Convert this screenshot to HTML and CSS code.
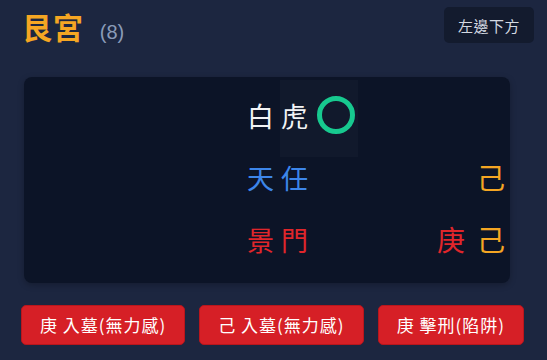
FILE: index.html
```html
<!DOCTYPE html>
<html lang="zh-Hant">
<head>
    <meta charset="UTF-8">
    <meta name="viewport" content="width=device-width, initial-scale=1.0">
    <title>艮宮</title>
    <link rel="stylesheet" href="styles.css">
</head>
<body>

<div class="palace">
    <div class="palace-header">
        <h1>艮宮 <span class="count">(8)</span></h1>
        <button class="pos-btn">左邊下方</button>
    </div>

    <div class="board">
        <div class="glow"></div>
        <div class="row">
            <span class="name white">白虎</span>
            <span class="ring"></span>
        </div>
        <div class="row">
            <span class="name blue">天任</span>
            <span class="stems"><span class="orange">己</span></span>
        </div>
        <div class="row">
            <span class="name red">景門</span>
            <span class="stems"><span class="red">庚</span><span class="orange">己</span></span>
        </div>
    </div>

    <div class="tags">
        <span class="tag">庚 入墓(無力感)</span>
        <span class="tag">己 入墓(無力感)</span>
        <span class="tag">庚 擊刑(陷阱)</span>
    </div>
</div>

</body>
</html>
```

FILE: styles.css
```css
body {
    margin: 0;
    background-color: #1c2640;
    font-family: "Noto Sans CJK TC", "Noto Sans", sans-serif;
    color: #e5e7eb;
}
.palace {
    padding: 7px 13px 0 22px;
}
.palace-header {
    display: flex;
    justify-content: space-between;
    align-items: flex-start;
    height: 70px;
}
h1 {
    margin: 0;
    font-size: 30px;
    line-height: 38px;
    font-weight: 700;
    color: #f5a623;
    letter-spacing: 1px;
}
.count {
    margin-left: 8px;
    font-family: "Liberation Sans", sans-serif;
    font-size: 20px;
    font-weight: 400;
    letter-spacing: 0;
    color: #8a9bb8;
}
.pos-btn {
    background-color: #131b2e;
    color: #d4d9e2;
    border: none;
    border-radius: 5px;
    height: 36px;
    padding: 0 14px;
    font-family: inherit;
    font-size: 15px;
    letter-spacing: 0.5px;
    cursor: pointer;
}
.board {
    position: relative;
    background-color: #0c1427;
    border-radius: 8px;
    margin: 0 24px 0 2px;
    padding: 7px 5px 13px 223px;
    box-shadow: 0 2px 6px rgba(0, 0, 0, 0.25);
}
.glow {
    position: absolute;
    left: 256px;
    top: 3px;
    width: 78px;
    height: 77px;
    background-color: rgba(255, 255, 255, 0.025);
}
.row {
    position: relative;
    display: flex;
    align-items: center;
    height: 62px;
}
.name {
    font-size: 27px;
    letter-spacing: 7px;
}
.ring {
    width: 28px;
    height: 28px;
    border: 5px solid #17c98f;
    border-radius: 50%;
    margin-left: 2px;
}
.stems {
    margin-left: auto;
    font-size: 28px;
}
.stems span + span {
    margin-left: 12px;
}
.white { color: #f3f4f6; }
.blue { color: #3d86ea; }
.red { color: #e0262b; }
.orange { color: #f5a623; }
.tags {
    display: flex;
    gap: 14px;
    margin-top: 22px;
    margin-left: -1px;
}
.tag {
    background-color: #d61f26;
    color: #ffffff;
    border: 1px solid #b9161c;
    border-radius: 5px;
    height: 38px;
    line-height: 38px;
    padding: 0 18px;
    font-size: 17px;
    letter-spacing: 1px;
}
```
